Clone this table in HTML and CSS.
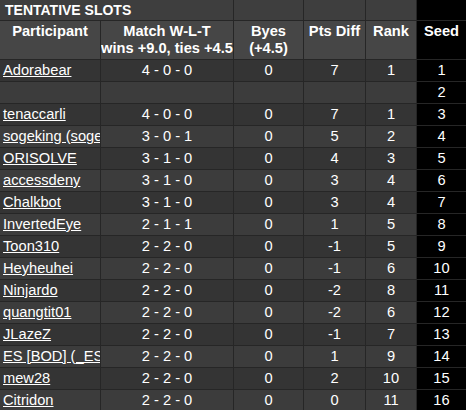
FILE: index.html
```html
<!DOCTYPE html>
<html>
<head>
<meta charset="utf-8">
<link rel="stylesheet" href="styles.css">
</head>
<body>
<table class="slots">
  <colgroup>
    <col class="c-name"><col class="c-match"><col class="c-byes"><col class="c-pts"><col class="c-rank"><col class="c-seed">
  </colgroup>
  <thead>
    <tr class="title-row">
      <td class="title" colspan="2">TENTATIVE SLOTS</td>
      <td></td><td></td><td></td><td class="seed"></td>
    </tr>
    <tr class="head-row">
      <th>Participant</th>
      <th>Match W-L-T<br>wins +9.0, ties +4.5</th>
      <th>Byes<br>(+4.5)</th>
      <th>Pts Diff</th>
      <th>Rank</th>
      <th class="seed">Seed</th>
    </tr>
  </thead>
  <tbody>
    <tr><td class="name"><a href="#">Adorabear</a></td><td>4 - 0 - 0</td><td>0</td><td>7</td><td>1</td><td class="seed">1</td></tr>
    <tr><td class="name"></td><td></td><td></td><td></td><td></td><td class="seed">2</td></tr>
    <tr><td class="name"><a href="#">tenaccarli</a></td><td>4 - 0 - 0</td><td>0</td><td>7</td><td>1</td><td class="seed">3</td></tr>
    <tr><td class="name"><a href="#">sogeking (sogeking)</a></td><td>3 - 0 - 1</td><td>0</td><td>5</td><td>2</td><td class="seed">4</td></tr>
    <tr><td class="name"><a href="#">ORISOLVE</a></td><td>3 - 1 - 0</td><td>0</td><td>4</td><td>3</td><td class="seed">5</td></tr>
    <tr><td class="name"><a href="#">accessdeny</a></td><td>3 - 1 - 0</td><td>0</td><td>3</td><td>4</td><td class="seed">6</td></tr>
    <tr><td class="name"><a href="#">Chalkbot</a></td><td>3 - 1 - 0</td><td>0</td><td>3</td><td>4</td><td class="seed">7</td></tr>
    <tr><td class="name"><a href="#">InvertedEye</a></td><td>2 - 1 - 1</td><td>0</td><td>1</td><td>5</td><td class="seed">8</td></tr>
    <tr><td class="name"><a href="#">Toon310</a></td><td>2 - 2 - 0</td><td>0</td><td>-1</td><td>5</td><td class="seed">9</td></tr>
    <tr><td class="name"><a href="#">Heyheuhei</a></td><td>2 - 2 - 0</td><td>0</td><td>-1</td><td>6</td><td class="seed">10</td></tr>
    <tr><td class="name"><a href="#">Ninjardo</a></td><td>2 - 2 - 0</td><td>0</td><td>-2</td><td>8</td><td class="seed">11</td></tr>
    <tr><td class="name"><a href="#">quangtit01</a></td><td>2 - 2 - 0</td><td>0</td><td>-2</td><td>6</td><td class="seed">12</td></tr>
    <tr><td class="name"><a href="#">JLazeZ</a></td><td>2 - 2 - 0</td><td>0</td><td>-1</td><td>7</td><td class="seed">13</td></tr>
    <tr><td class="name"><a href="#">ES [BOD] (_ES_)</a></td><td>2 - 2 - 0</td><td>0</td><td>1</td><td>9</td><td class="seed">14</td></tr>
    <tr><td class="name"><a href="#">mew28</a></td><td>2 - 2 - 0</td><td>0</td><td>2</td><td>10</td><td class="seed">15</td></tr>
    <tr><td class="name"><a href="#">Citridon</a></td><td>2 - 2 - 0</td><td>0</td><td>0</td><td>11</td><td class="seed">16</td></tr>
  </tbody>
</table>
</body>
</html>
```
FILE: styles.css
```css
html, body {
  margin: 0;
  padding: 0;
  background: #000;
}
.slots {
  width: 466px;
  table-layout: fixed;
  border-collapse: separate;
  border-spacing: 0;
  font-family: "Liberation Sans", Arial, sans-serif;
  font-size: 14.67px;
  color: #fff;
}
.c-name { width: 101px; }
.c-match { width: 133px; }
.c-byes { width: 70px; }
.c-pts { width: 62px; }
.c-rank { width: 51px; }
.c-seed { width: 49px; }

.slots td, .slots th {
  border-right: 1px solid #262626;
  border-bottom: 1px solid #262626;
  padding: 0 3px;
  white-space: nowrap;
  overflow: hidden;
  text-align: center;
}
.slots tr > :last-child { border-right: none; }

.title-row td {
  background: #3e3e3e;
  height: 20px;
  line-height: 20px;
  padding: 0;
}
.title-row td.title {
  text-align: left;
  padding-left: 5px;
  font-weight: bold;
  font-size: 14px;
}
.head-row th {
  background: #464646;
  font-weight: bold;
  line-height: 17px;
  padding: 2px 0;
  vertical-align: top;
  height: 34px;
}
.slots tbody td {
  height: 21px;
  line-height: 21px;
  background: #343434;
}
.slots tbody tr:nth-child(even) td { background: #3c3c3c; }
.slots td.name {
  text-align: left;
  text-overflow: clip;
}
.slots a {
  color: #fff;
  text-decoration: underline;
}
.slots .seed,
.slots tbody tr td.seed {
  background: #000;
}
```
